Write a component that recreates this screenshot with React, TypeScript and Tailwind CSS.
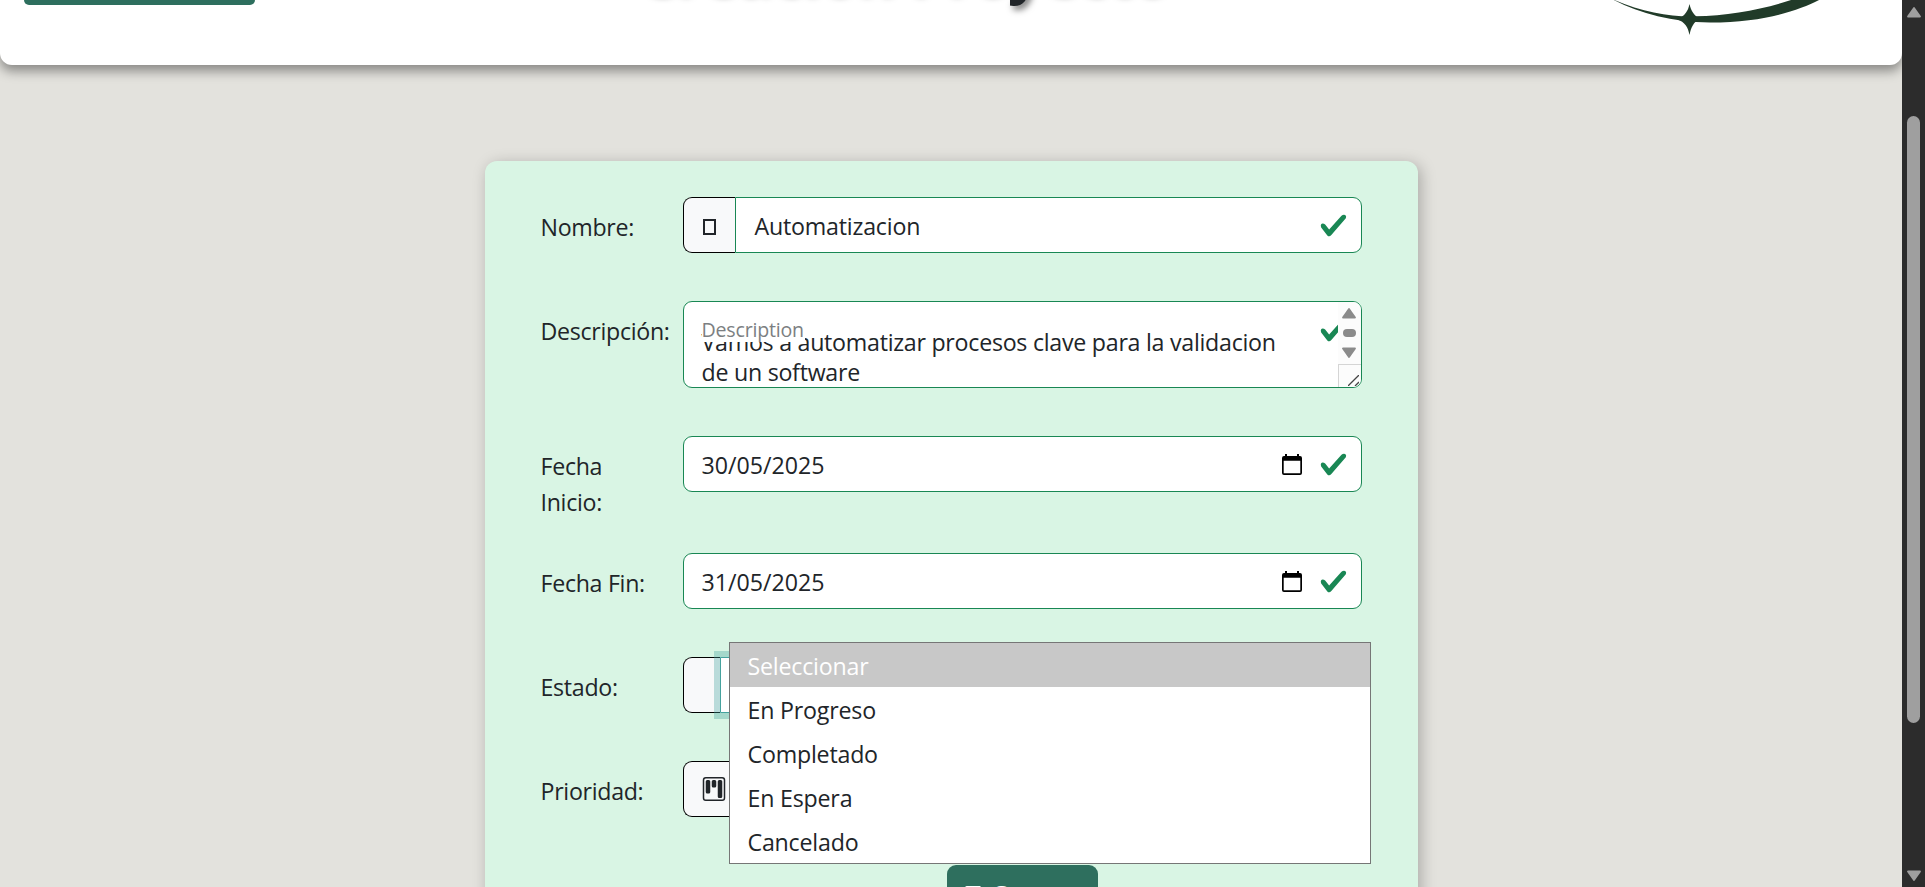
import React from "react";

const inputBase = "flex h-14 w-[679px] items-center rounded-[9px] border border-[#198754] bg-white";

function Check() {
  return (
    <svg className="h-[29px] w-[29px] shrink-0" viewBox="0 0 8 8" fill="#198754">
      <path d="M2.3 6.73.6 4.53c-.4-1.04.46-1.4 1.1-.8l1.1 1.4 3.4-3.8c.6-.63 1.6-.27 1.2.7l-4 4.6c-.43.5-.8.4-1.1.1z" />
    </svg>
  );
}

function CalendarIcon() {
  return (
    <svg className="h-[21px] w-5 shrink-0" viewBox="0 0 20 21">
      <path fillRule="evenodd" d="M3 0h2v2h10V0h2v2h1a2 2 0 0 1 2 2v15a2 2 0 0 1-2 2H2a2 2 0 0 1-2-2V4a2 2 0 0 1 2-2h1zM1.700 6.700v12.600h16.600V6.700z" />
    </svg>
  );
}

function Label({ children }: { children: React.ReactNode }) {
  return <label className="block w-[142px] shrink-0 pt-3 leading-9 tracking-[-0.3px]">{children}</label>;
}

function Row({ label, className, children }: { label: React.ReactNode; className: string; children: React.ReactNode }) {
  return (
    <div className={`flex ${className}`}>
      <Label>{label}</Label>
      {children}
    </div>
  );
}

function DateField({ value }: { value: string }) {
  return (
    <div className={`${inputBase} justify-between pl-[18px] pr-[13px]`}>
      <span className="pt-0.5">{value}</span>
      <span className="flex items-center gap-[17px]">
        <CalendarIcon />
        <Check />
      </span>
    </div>
  );
}

function Arrow({ className }: { className: string }) {
  return (
    <svg className={className} viewBox="0 0 14 11">
      <path d="M7 1 13 9.5H1z" fill="currentColor" stroke="currentColor" strokeWidth="1.8" strokeLinejoin="round" />
    </svg>
  );
}

const options = ["En Progreso", "Completado", "En Espera", "Cancelado"];

export default function App() {
  return (
    <div className="flex h-[887px] w-[1925px] overflow-hidden bg-[#e3e2dd] font-['Open_Sans','Noto_Sans',sans-serif] text-[23.2px] text-[#212529]">
      <div className="h-full w-[1902px] overflow-hidden">
        <header className="relative flex h-[65px] items-start justify-between rounded-b-xl bg-white pl-6 shadow-[0_6px_12px_rgba(0,0,0,0.4)]">
          <div className="h-[5px] w-[231px] rounded-b-[9px] bg-[#2e6f5e]" />
          <h1 className="absolute left-[637px] top-[-71px] whitespace-nowrap text-[58.5px] font-bold leading-[80px] [text-shadow:3px_4px_6px_rgba(0,0,0,0.5)]">
            Creación Proyecto
          </h1>
          <svg className="absolute left-[1600px] top-0 h-9 w-[230px]" viewBox="0 0 230 36" fill="#213b29">
            <path d="M10-2C40 12 70 17 95 16.300C130 15.500 165 9 194-1H221C200 10 165 22.500 110 22.500C70 22 38 13 10-2Z" />
            <path d="M89.500 4C91 11 94 15 99 18.500C94 22.500 91 27 89.500 35C88 27 85 22 77 19.500C85 16 88 11 89.500 4Z" />
          </svg>
        </header>
        <main className="flex justify-center pt-24">
          <section className="h-[800px] w-[933px] rounded-xl bg-[#d9f5e4] pl-14 pt-9 shadow-[3px_3px_15px_rgba(0,0,0,0.25)]">
            <Row label="Nombre:" className="h-[104px]">
              <div className="flex">
                <div className="flex h-14 w-[52px] items-center justify-center rounded-l-[9px] border border-r-0 border-black bg-[#f8f9fa] pt-[3px]">
                  <div className="h-4 w-[13px] border-2 border-[#212529]" />
                </div>
                <div className="flex h-14 w-[627px] items-center justify-between rounded-r-[9px] border border-[#198754] bg-white pl-[19px] pr-[13px]">
                  <span className="pt-0.5 tracking-[-0.2px]">Automatizacion</span>
                  <Check />
                </div>
              </div>
            </Row>
            <Row label="Descripción:" className="h-[135px]">
              <div className="relative h-[87px] w-[679px] overflow-hidden rounded-[9px] border border-[#198754] bg-white">
                <p className="pl-[18px] pt-[25px] leading-[30px] tracking-[-0.26px]">
                  Vamos a automatizar procesos clave para la validacion
                  <br />
                  de un software
                </p>
                <div className="absolute left-[18px] top-[10px] h-[30px] w-[103px] bg-white text-[19.6px] leading-[36px] tracking-[-0.2px] text-[#7c7f82]">Description</div>
                <div className="absolute right-[13px] top-[14px]">
                  <Check />
                </div>
                <div className="absolute right-0 top-0 flex h-full w-[23px] flex-col items-center bg-[#fcfcfc] pt-[6px] text-[#8b8b8b]">
                  <Arrow className="h-[11px] w-[14px]" />
                  <div className="mt-[10px] h-2 w-[13px] rounded-full bg-[#8b8b8b]" />
                  <Arrow className="mt-[10px] h-[11px] w-[14px] rotate-180" />
                  <div className="mt-[6px] flex w-full flex-1 items-end justify-end border-l border-t border-[#d5d5d5] pb-[1px] pr-[2px]">
                    <svg className="h-[11px] w-[11px]" viewBox="0 0 11 11" stroke="#444" strokeWidth="1.3">
                      <path d="M0 11 11 0M7 11l4-4" />
                    </svg>
                  </div>
                </div>
              </div>
            </Row>
            <Row label={<>Fecha<br />Inicio:</>} className="h-[117px]">
              <DateField value="30/05/2025" />
            </Row>
            <Row label="Fecha Fin:" className="h-[104px]">
              <DateField value="31/05/2025" />
            </Row>
            <Row label="Estado:" className="relative h-[104px]">
              <div className="flex">
                <div className="h-14 w-[37px] rounded-l-[9px] border border-r-0 border-black bg-[#f8f9fa]" />
                <div className="h-14 w-[642px] rounded-r-[9px] border border-[#45a29e] bg-white [clip-path:inset(-6px_600px_-6px_-6px)] shadow-[0_0_0_6px_rgba(69,162,158,0.35)]" />
              </div>
              <div className="absolute left-[188px] top-[-15px] z-10 h-[222px] w-[642px] border border-[#767676] bg-white tracking-[-0.2px]">
                <div className="flex h-11 items-center bg-[#c8c8c8] pl-[18px] pt-0.5 text-white">Seleccionar</div>
                {options.map((o) => (
                  <div key={o} className="flex h-11 items-center pl-[18px] pt-0.5">{o}</div>
                ))}
              </div>
            </Row>
            <Row label="Prioridad:" className="h-[104px]">
              <div className="flex h-14 w-[60px] items-center rounded-l-[9px] border border-r-0 border-black bg-[#f8f9fa] pl-[18px]">
                <svg className="h-6 w-6" viewBox="0 0 16 16" fill="#212529">
                  <path d="M13.500 1a1 1 0 0 1 1 1v12a1 1 0 0 1-1 1h-11a1 1 0 0 1-1-1V2a1 1 0 0 1 1-1zm-11-1a2 2 0 0 0-2 2v12a2 2 0 0 0 2 2h11a2 2 0 0 0 2-2V2a2 2 0 0 0-2-2z" />
                  <path d="M6.500 3a1 1 0 0 1 1-1h1a1 1 0 0 1 1 1v3a1 1 0 0 1-1 1h-1a1 1 0 0 1-1-1zm-4 0a1 1 0 0 1 1-1h1a1 1 0 0 1 1 1v7a1 1 0 0 1-1 1h-1a1 1 0 0 1-1-1zm8 0a1 1 0 0 1 1-1h1a1 1 0 0 1 1 1v10a1 1 0 0 1-1 1h-1a1 1 0 0 1-1-1z" />
                </svg>
              </div>
            </Row>
            <div className="ml-[406px] flex h-14 w-[151px] items-start rounded-[9px] bg-[#2e6f5e] pl-[18px] text-white">
              <svg className="mt-[21px] h-[21px] w-[21px]" viewBox="0 0 21 21" fill="currentColor">
                <path fillRule="evenodd" d="M2 0h13l6 6v13a2 2 0 0 1-2 2H2a2 2 0 0 1-2-2V2a2 2 0 0 1 2-2zm1 3v5h11V3zm7.500 8a3 3 0 1 0 0 6 3 3 0 0 0 0-6z" />
              </svg>
              <span className="ml-[6px] pt-[11px] leading-9">Generar</span>
            </div>
          </section>
        </main>
      </div>
      <aside className="flex h-full w-[23px] flex-col items-center bg-[#2c2c2c] pt-[7px] text-[#9f9f9f]">
        <Arrow className="h-[11px] w-[14px]" />
        <div className="mt-[98px] h-[607px] w-[13px] rounded-full bg-[#9f9f9f]" />
        <Arrow className="mt-[147px] h-[11px] w-[14px] rotate-180" />
      </aside>
    </div>
  );
}
